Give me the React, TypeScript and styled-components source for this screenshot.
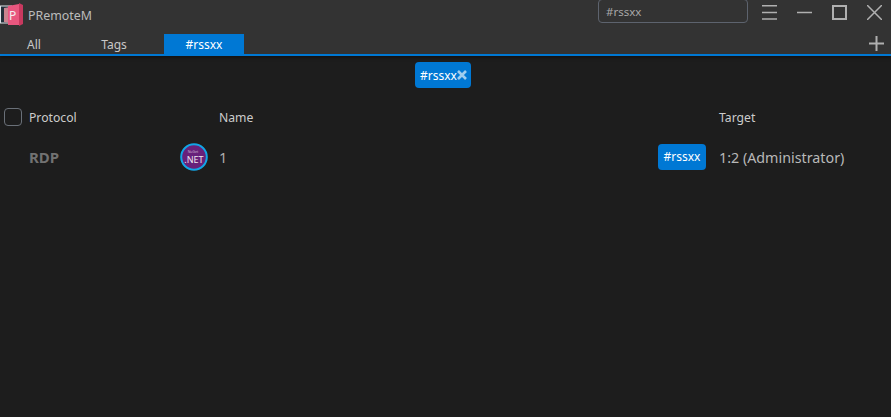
import { FunctionComponent } from "react";
import styled, { createGlobalStyle } from "styled-components";

const GlobalStyle = createGlobalStyle`
    html, body {
        margin: 0;
        height: 100%;
        background-color: #1d1d1d;
    }

    #root {
        height: 100%;
    }
`;

const Page = styled.div`
    height: 417px;
    overflow: hidden;
    background-color: #1d1d1d;
    font-family: "Noto Sans", "Open Sans", sans-serif;
`;

const Header = styled.header`
    height: 54px;
    background-color: #333333;
    border-bottom: 2px solid #0078d4;
    box-shadow: 0 2px 3px rgba(0, 0, 0, 0.35);
    display: flex;
    flex-direction: column;
`;

const TitleBar = styled.div`
    height: 34px;
    display: flex;
    align-items: flex-start;
`;

const Logo = styled.svg`
    width: 24px;
    height: 30px;
    flex: none;
`;

const AppName = styled.div`
    margin-left: 4px;
    line-height: 31px;
    font-size: 12.4px;
    color: #bcbcbc;
    flex: 1;
`;

const SearchBox = styled.div`
    width: 150px;
    height: 24px;
    margin-top: -1px;
    box-sizing: border-box;
    border: 1px solid #5d636e;
    border-radius: 4px;
    padding-left: 7px;
    font-size: 11.5px;
    line-height: 23px;
    color: #a8a8a8;
`;

const WindowButtons = styled.div`
    margin-left: 14px;
    margin-right: 9px;
    width: 120px;
    height: 24px;
    display: flex;
    justify-content: space-between;
    align-items: center;
`;

const IconSvg = styled.svg<{ $heavy?: boolean }>`
    width: 15px;
    height: 15px;
    stroke: #b0b0b0;
    stroke-width: ${p => (p.$heavy ? 2 : 1.5)};
    fill: none;
    flex: none;
`;

const TabBar = styled.div`
    flex: 1;
    display: flex;
    align-items: flex-end;
    gap: 10px;
    padding-left: 4px;
    padding-right: 7px;
`;

const Tab = styled.div<{ $active?: boolean; $width: number }>`
    width: ${p => p.$width}px;
    height: 20px;
    line-height: 21px;
    text-align: center;
    font-size: 12px;
    color: ${p => (p.$active ? "#ffffff" : "#c8c8c8")};
    background-color: ${p => (p.$active ? "#0078d4" : "transparent")};
`;

const AddButton = styled.div`
    margin-left: auto;
    height: 20px;
    display: flex;
    align-items: center;
    margin-bottom: 1px;
`;

const FilterRow = styled.div`
    display: flex;
    justify-content: center;
    padding-top: 6px;
    height: 26px;
    padding-right: 5px;
`;

const FilterChip = styled.div`
    display: flex;
    align-items: center;
    height: 26px;
    padding: 0 4px 0 5px;
    border-radius: 4px;
    background-color: #0078d4;
    color: #ffffff;
    font-size: 12px;
`;

const ChipClose = styled.svg`
    width: 10px;
    height: 10px;
    stroke: #9fcdee;
    stroke-width: 2.6;
    fill: none;
`;

const TableHead = styled.div`
    display: grid;
    grid-template-columns: 25px 190px 500px 1fr;
    align-items: center;
    margin-top: 20px;
    height: 18px;
    padding-left: 4px;
    font-size: 12.2px;
    color: #cccccc;
`;

const CheckBox = styled.div`
    width: 18px;
    height: 18px;
    box-sizing: border-box;
    border: 1px solid #6a7078;
    border-radius: 4px;
`;

const TableRow = styled.div`
    display: grid;
    grid-template-columns: 151px 39px 500px 1fr;
    align-items: center;
    margin-top: 17px;
    padding-left: 29px;
    height: 28px;
`;

const Protocol = styled.div`
    font-size: 15px;
    font-weight: 700;
    color: #727272;
`;

const RowIcon = styled.svg`
    width: 28px;
    height: 28px;
    display: block;
`;

const NameCell = styled.div`
    display: flex;
    align-items: center;
    justify-content: space-between;
    padding-right: 13px;
`;

const RowName = styled.div`
    font-size: 14.5px;
    color: #b0b0b0;
`;

const Tag = styled.div`
    width: 48px;
    height: 26px;
    line-height: 26px;
    text-align: center;
    border-radius: 4px;
    background-color: #0078d4;
    color: #ffffff;
    font-size: 12px;
`;

const RowTarget = styled.div`
    font-size: 14.3px;
    color: #b8b8b8;
    white-space: nowrap;
`;

const App: FunctionComponent = () => (
    <Page>
        <GlobalStyle />
        <Header>
            <TitleBar>
                <Logo viewBox="0 0 24 30">
                    <rect x="0.5" y="6" width="11" height="17" fill="#22303a" stroke="#dfe6ea" strokeWidth="1" />
                    <polygon points="4,8 10,7 10,23 4,22" fill="#c9848f" />
                    <polygon points="8,6 19,4 19,25 8,25" fill="#e8577f" />
                    <polygon points="19,3 23,5 23,24 19,26" fill="#c8395f" />
                    <text x="9" y="20" fontFamily="Noto Sans, sans-serif" fontSize="12" fill="#f4eef0">P</text>
                </Logo>
                <AppName>PRemoteM</AppName>
                <SearchBox>#rssxx</SearchBox>
                <WindowButtons>
                    <IconSvg viewBox="0 0 15 15">
                        <path d="M0 .8h15M0 7.5h15M0 14h15" />
                    </IconSvg>
                    <IconSvg viewBox="0 0 15 15">
                        <path d="M0 7.5h15" />
                    </IconSvg>
                    <IconSvg viewBox="0 0 15 15" $heavy>
                        <rect x="1" y="1" width="13" height="13" />
                    </IconSvg>
                    <IconSvg viewBox="0 0 15 15">
                        <path d="M0 0l15 15M15 0L0 15" />
                    </IconSvg>
                </WindowButtons>
            </TitleBar>
            <TabBar>
                <Tab $width={60}>All</Tab>
                <Tab $width={80}>Tags</Tab>
                <Tab $width={80} $active>#rssxx</Tab>
                <AddButton>
                    <IconSvg viewBox="0 0 15 15" $heavy>
                        <path d="M7.5 0v15M0 7.5h15" />
                    </IconSvg>
                </AddButton>
            </TabBar>
        </Header>
        <FilterRow>
            <FilterChip>
                #rssxx
                <ChipClose viewBox="0 0 10 10">
                    <path d="M1 1l8 8M9 1L1 9" />
                </ChipClose>
            </FilterChip>
        </FilterRow>
        <TableHead>
            <CheckBox />
            <div>Protocol</div>
            <div>Name</div>
            <div>Target</div>
        </TableHead>
        <TableRow>
            <Protocol>RDP</Protocol>
            <RowIcon viewBox="0 0 28 28">
                <circle cx="14" cy="14" r="12.8" fill="#68217a" stroke="#12a5e6" strokeWidth="2" />
                <text x="13" y="10" textAnchor="middle" fontFamily="Noto Sans, sans-serif" fontSize="3.5" fill="#c9b3d0">NuGet</text>
                <text x="14" y="19.5" textAnchor="middle" fontFamily="Noto Sans, sans-serif" fontSize="9" fill="#eee6f0">.NET</text>
            </RowIcon>
            <NameCell>
                <RowName>1</RowName>
                <Tag>#rssxx</Tag>
            </NameCell>
            <RowTarget>1:2 (Administrator)</RowTarget>
        </TableRow>
    </Page>
);

export default App;
